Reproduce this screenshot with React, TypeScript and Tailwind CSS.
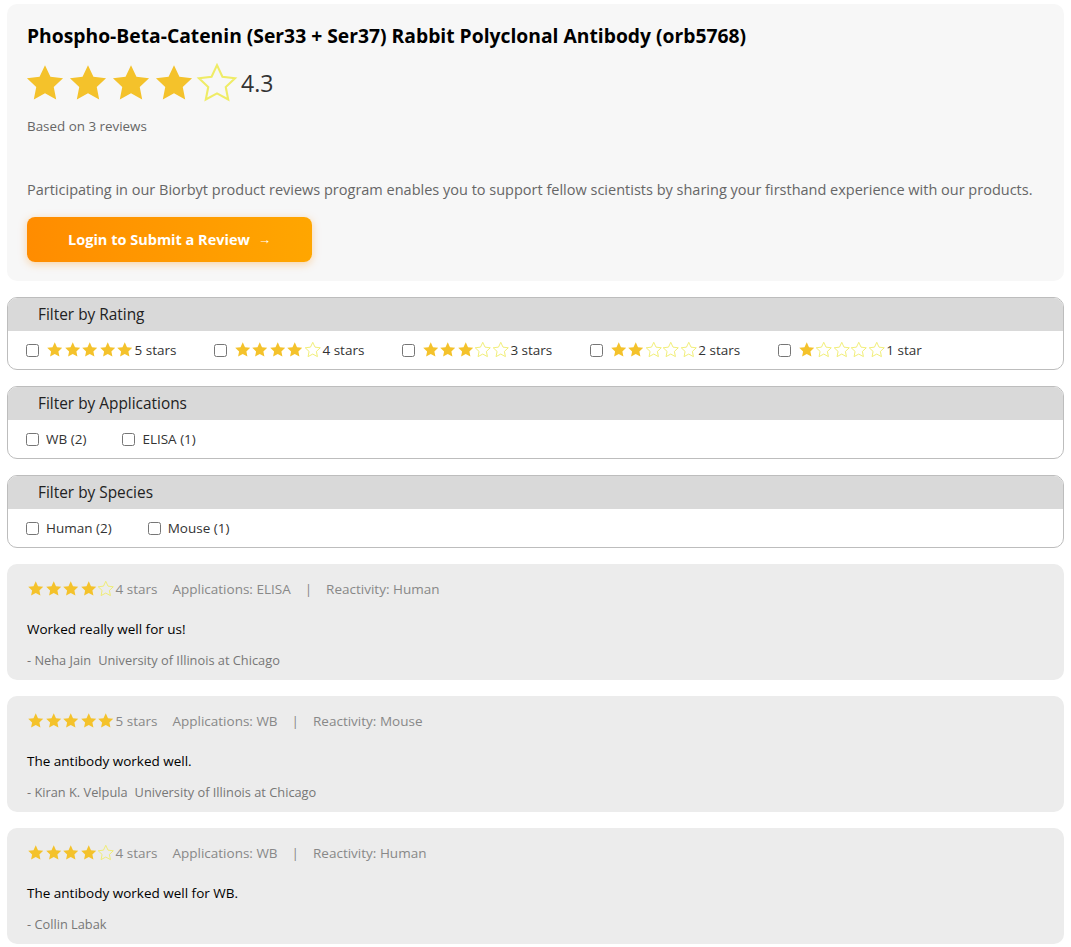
import React from 'react';

const FONT = { fontFamily: '"Open Sans", "Liberation Sans", sans-serif' };

const STAR_PATH = 'M12 1.8l3.1 6.6 7.2.9-5.3 5 1.4 7.1L12 17.9l-6.4 3.5 1.4-7.1-5.3-5 7.2-.9z';

const Star = ({ filled, size }: { filled: boolean; size: number }) => (
  <svg width={size} height={size} viewBox="0 0 24 24" className="shrink-0">
    {filled ? (
      <path d={STAR_PATH} fill="#f4c22b" />
    ) : (
      <path d={STAR_PATH} fill="none" stroke="#efec66" strokeWidth={1.2} />
    )}
  </svg>
);

const StarRow = ({ count, size = 18 }: { count: number; size?: number }) => (
  <span className="inline-flex items-center">
    {[1, 2, 3, 4, 5].map((i) => (
      <Star key={i} filled={i <= count} size={size} />
    ))}
  </span>
);

const Checkbox = () => (
  <input type="checkbox" className="w-[13px] h-[13px] m-0 shrink-0 accent-gray-600" />
);

interface FilterBoxProps {
  title: string;
  gap: string;
  children: React.ReactNode;
}

const FilterBox: React.FC<FilterBoxProps> = ({ title, gap, children }) => (
  <div className="rounded-[10px] border border-[#bdbdbd] bg-white overflow-hidden">
    <div className="h-[33px] bg-[#d9d9d9] pl-[30px] flex items-center text-[15.4px] text-[#222]">{title}</div>
    <div className={`h-[38px] px-[18px] flex items-center ${gap} text-[13.5px] text-[#333]`}>{children}</div>
  </div>
);

const reviews = [
  { stars: 4, app: 'ELISA', species: 'Human', text: 'Worked really well for us!', author: '- Neha Jain', org: 'University of Illinois at Chicago' },
  { stars: 5, app: 'WB', species: 'Mouse', text: 'The antibody worked well.', author: '- Kiran K. Velpula', org: 'University of Illinois at Chicago' },
  { stars: 4, app: 'WB', species: 'Human', text: 'The antibody worked well for WB.', author: '- Collin Labak', org: '' },
];

export default function App() {
  return (
    <div className="bg-white w-[1071px] min-h-[947px] px-[7px] pt-[4px] flex flex-col gap-[16px]" style={FONT}>
      {/* summary card */}
      <div className="bg-[#f7f7f7] rounded-[10px] px-[20px] pt-[20px] pb-[19px]">
        <h1 className="text-[19.3px] font-bold text-black leading-[24px]">
          Phospho-Beta-Catenin (Ser33 + Ser37) Rabbit Polyclonal Antibody (orb5768)
        </h1>
        <div className="flex items-center mt-[14px] gap-[3px] -ml-[3px]">
          <span className="inline-flex items-center gap-[1px]">
            {[1, 2, 3, 4, 5].map((i) => (
              <Star key={i} filled={i <= 4} size={42} />
            ))}
          </span>
          <span className="text-[23px] text-[#333] leading-none">4.3</span>
        </div>
        <div className="text-[13.4px] text-[#666] mt-[12px] leading-[20px]">Based on 3 reviews</div>
        <p className="text-[14.5px] text-[#666] mt-[44px] leading-[20px] whitespace-nowrap">
          Participating in our Biorbyt product reviews program enables you to support fellow scientists by sharing your firsthand experience with our products.
        </p>
        <button className="mt-[17px] w-[285px] h-[45px] rounded-[8px] bg-gradient-to-r from-[#ff8c00] to-[#ffa600] text-white font-bold text-[14.5px] shadow-[0_2px_8px_rgba(255,140,0,0.35)] flex items-center justify-center gap-[8px]">
          <span>Login to Submit a Review</span>
          <span className="text-[13px]">→</span>
        </button>
      </div>

      <FilterBox title="Filter by Rating" gap="gap-[37.5px]">
        {[5, 4, 3, 2, 1].map((n) => (
          <label key={n} className="flex items-center gap-[7px]">
            <Checkbox />
            <span className="flex items-center">
              <StarRow count={n} size={17.5} />
              <span className="ml-[1px]">{n === 1 ? '1 star' : `${n} stars`}</span>
            </span>
          </label>
        ))}
      </FilterBox>

      <FilterBox title="Filter by Applications" gap="gap-[36px]">
        {['WB (2)', 'ELISA (1)'].map((t) => (
          <label key={t} className="flex items-center gap-[7px]">
            <Checkbox />
            <span>{t}</span>
          </label>
        ))}
      </FilterBox>

      <FilterBox title="Filter by Species" gap="gap-[36px]">
        {['Human (2)', 'Mouse (1)'].map((t) => (
          <label key={t} className="flex items-center gap-[7px]">
            <Checkbox />
            <span>{t}</span>
          </label>
        ))}
      </FilterBox>

      {reviews.map((r, idx) => (
        <div key={idx} className="bg-[#ececec] rounded-[10px] px-[20px] pt-[15px] h-[116px]">
          <div className="flex items-center text-[13.5px] text-[#888] leading-[20px]">
            <StarRow count={r.stars} size={17.5} />
            <span className="ml-[1px]">{r.stars} stars</span>
            <span className="ml-[15px]">Applications: {r.app}</span>
            <span className="mx-[14px] text-[#888]">|</span>
            <span>Reactivity: {r.species}</span>
          </div>
          <div className="text-[13.5px] text-black mt-[20px] leading-[20px]">{r.text}</div>
          <div className="text-[12.8px] text-[#777] mt-[12px] leading-[18px]">
            {r.author}
            {r.org && <span className="ml-[7px]">{r.org}</span>}
          </div>
        </div>
      ))}
    </div>
  );
}
